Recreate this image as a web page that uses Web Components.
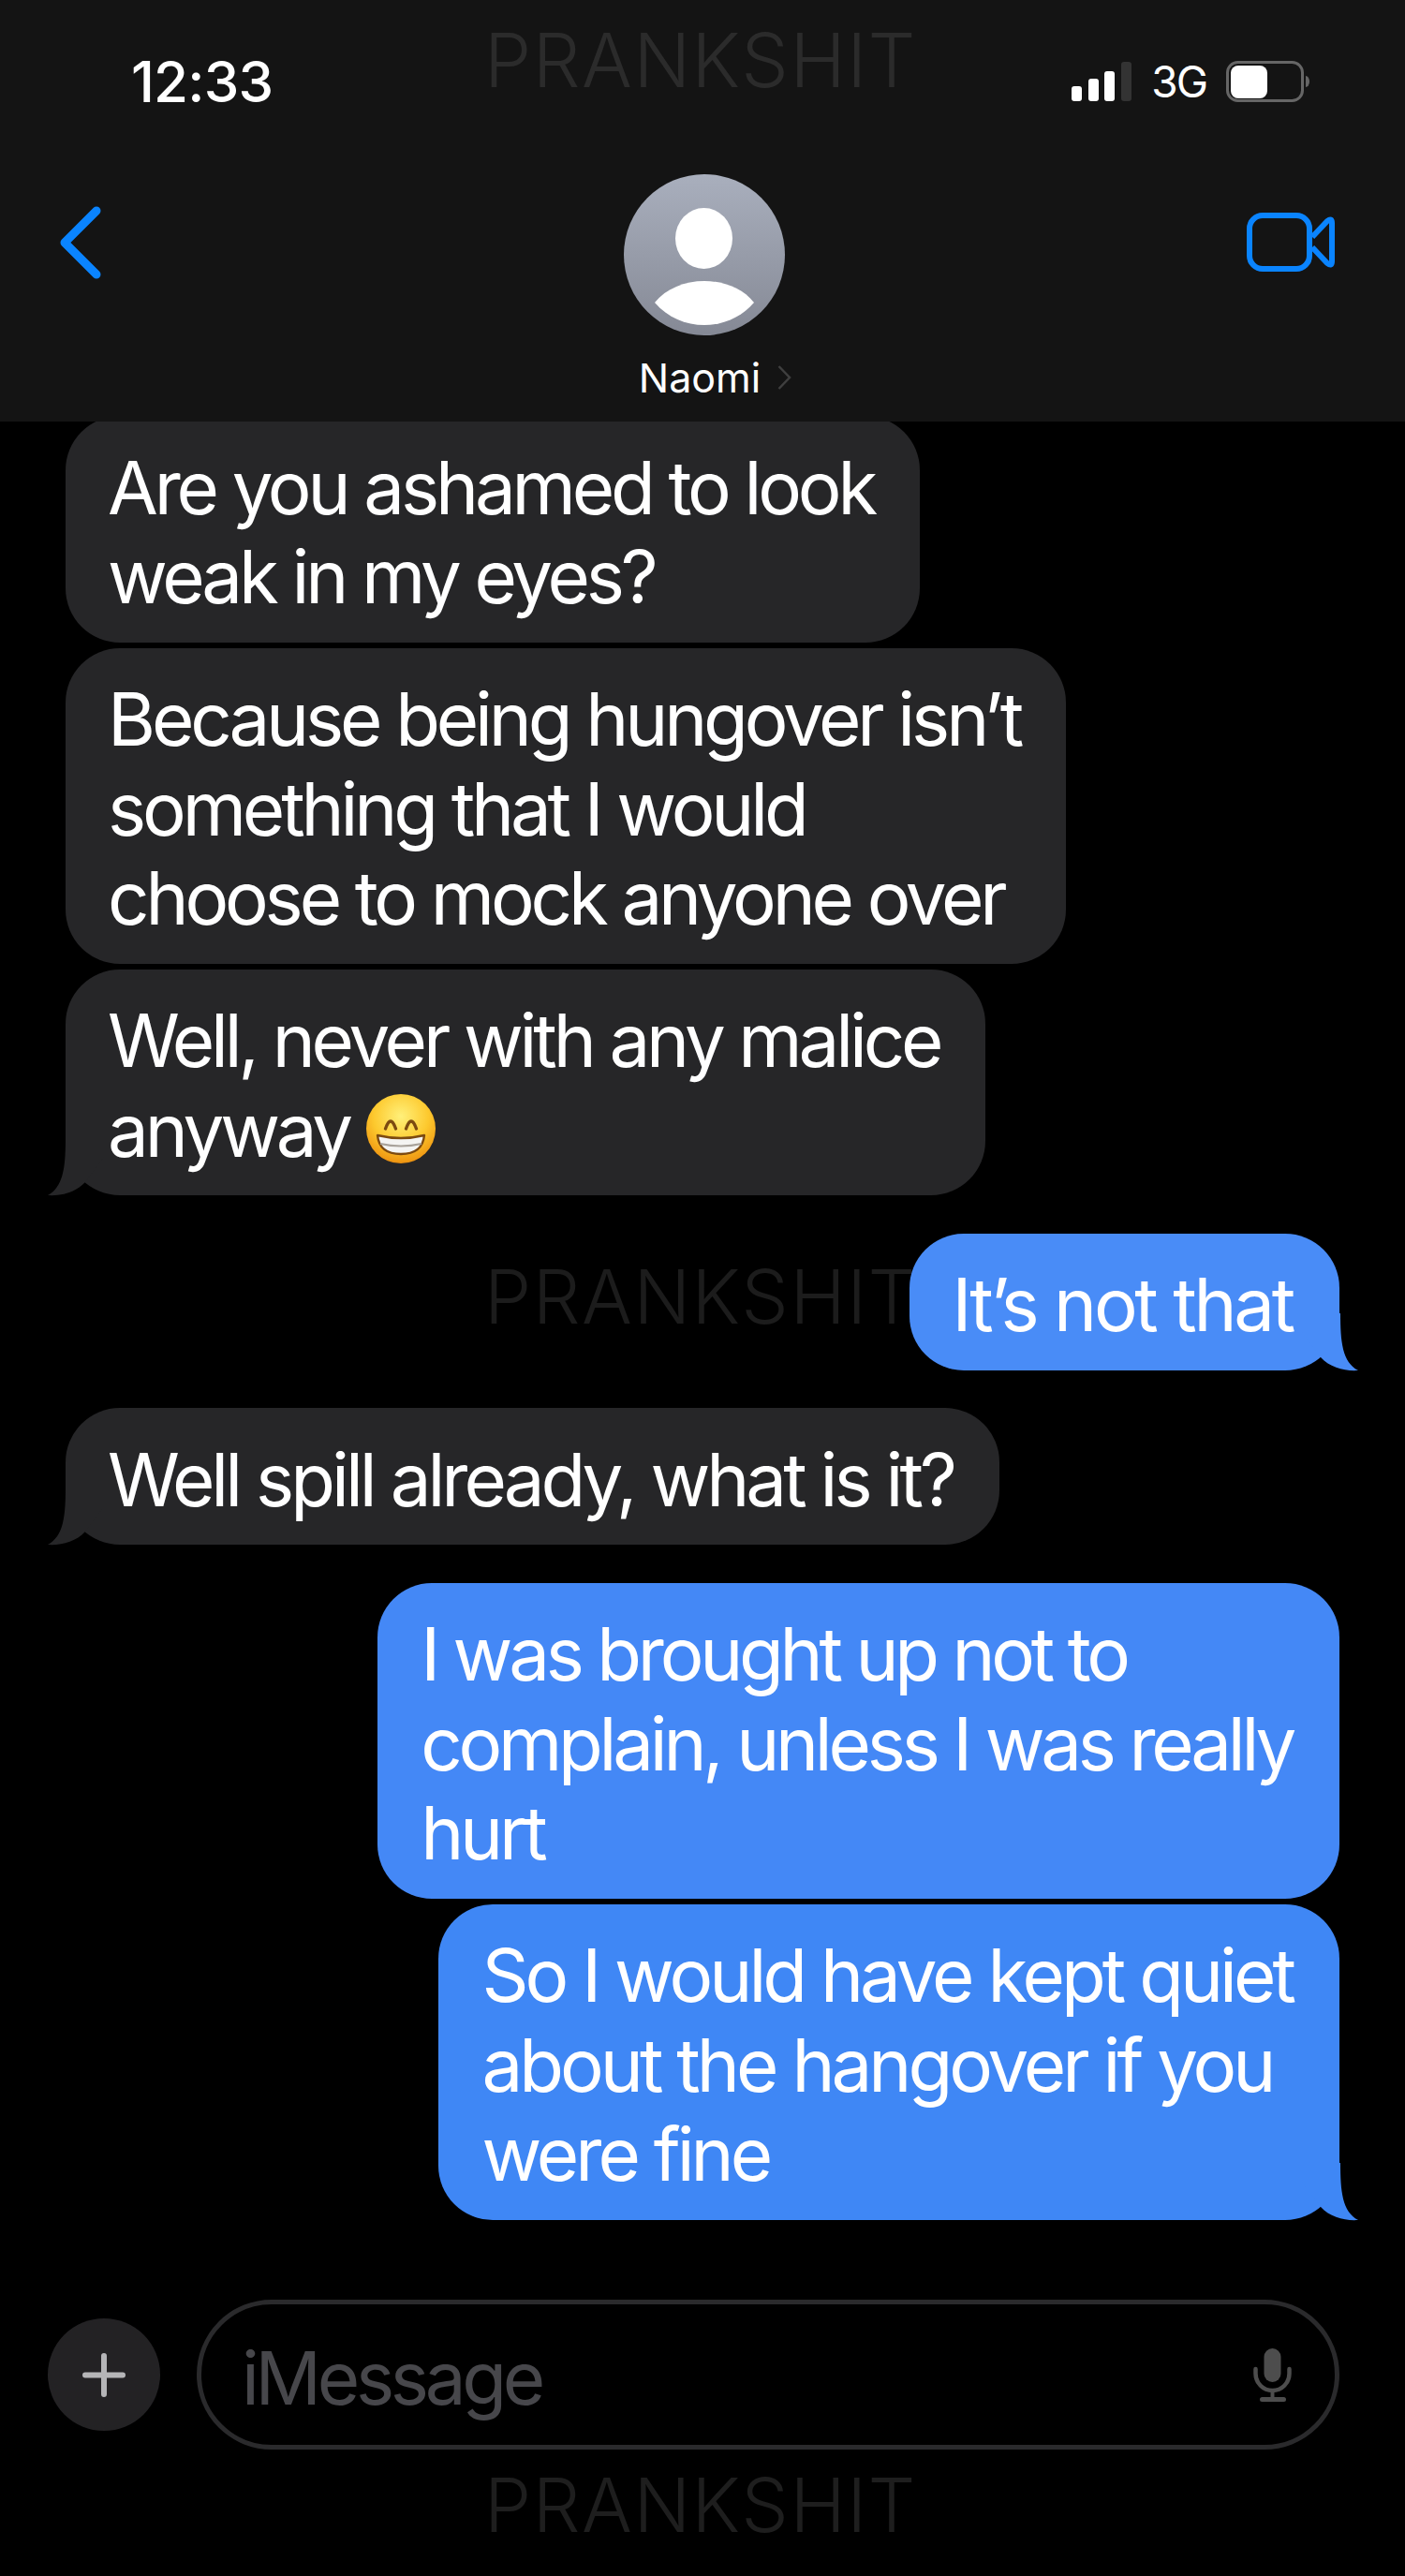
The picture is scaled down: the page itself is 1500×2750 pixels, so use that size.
<!DOCTYPE html>
<html>
<head>
<meta charset="utf-8">
<title>Naomi</title>
<style>
  html, body { margin: 0; background: #000; }
  body { font-family: Inter, "Liberation Sans", sans-serif; color: #fff; height: 2750px; overflow: hidden; }
</style>
</head>
<body>
<imsg-header></imsg-header>
<imsg-thread>
  <imsg-watermark floating style="top: 900px"></imsg-watermark>
  <imsg-bubble>Are you ashamed to look<br>weak in my eyes?</imsg-bubble>
  <imsg-bubble>Because being hungover isn’t<br>something that I would<br>choose to mock anyone over</imsg-bubble>
  <imsg-bubble tail>Well, never with any malice<br>anyway <imsg-grin></imsg-grin></imsg-bubble>
  <imsg-bubble from="me" tail class="gap" style="--out: #498cf7; --track: -3.3px">It’s not that</imsg-bubble>
  <imsg-bubble tail class="gap" style="--track: -4px">Well spill already, what is it?</imsg-bubble>
  <imsg-bubble from="me" class="gap" style="--out: #4488f6; --track: -4.25px">I was brought up not to<br>complain, unless I was really<br>hurt</imsg-bubble>
  <imsg-bubble from="me" tail style="--out: #3f87f5; --track: -4px">So I would have kept quiet<br>about the hangover if you<br>were fine</imsg-bubble>
</imsg-thread>
<imsg-composer></imsg-composer>
<imsg-watermark style="margin-top: 19px; --mark: #1e1e1e"></imsg-watermark>

<script>
class ImsgWatermark extends HTMLElement {
  constructor() {
    super();
    const shadowRoot = this.attachShadow({ mode: 'open' });
    shadowRoot.innerHTML = `
      <style>
        :host {
          display: block;
          width: 1496px;
          text-align: center;
          font: 300 80px/80px Inter, "Liberation Sans", sans-serif;
          letter-spacing: 1.5px;
          color: var(--mark, #1c1c1c);
        }
        :host([floating]) {
          position: absolute;
          left: 0;
        }
      </style>
      PRANKSHIT
    `;
  }
}
customElements.define('imsg-watermark', ImsgWatermark);

class ImsgHeader extends HTMLElement {
  constructor() {
    super();
    const shadowRoot = this.attachShadow({ mode: 'open' });
    shadowRoot.innerHTML = `
      <style>
        :host {
          display: block;
          position: relative;
          z-index: 2;
          height: 450px;
          background: #141414;
          font-family: Inter, "Liberation Sans", sans-serif;
        }
        imsg-watermark {
          position: absolute;
          left: 0;
          top: 24px;
          --mark: #2b2b2b;
        }
        .status {
          display: flex;
          align-items: center;
          height: 60px;
          padding: 57px 102px 0 140px;
        }
        .time {
          font-size: 60px;
          font-weight: 500;
          line-height: 60px;
          letter-spacing: -0.8px;
          margin-right: auto;
        }
        .net {
          font-size: 46px;
          line-height: 60px;
          letter-spacing: -2px;
          margin: 0 21px;
        }
        svg { display: block; }
        .nav {
          display: grid;
          grid-template-columns: 1fr auto 1fr;
          margin-top: 69px;
          padding: 0 75px 0 64px;
        }
        .back { margin-top: 34px; }
        .video { margin-top: 41px; justify-self: end; }
        .who {
          display: flex;
          flex-direction: column;
          align-items: center;
          margin-left: 16px;
        }
        .name {
          display: flex;
          align-items: center;
          gap: 18px;
          margin: 20px 0 0 22px;
          font-size: 43px;
          line-height: 50px;
          letter-spacing: 0;
        }
      </style>
      <imsg-watermark></imsg-watermark>
      <div class="status">
        <span class="time">12:33</span>
        <svg width="64" height="42" viewBox="0 0 64 42">
          <rect x="0" y="26" width="11" height="16" rx="3" fill="#fff"/>
          <rect x="18" y="18" width="11" height="24" rx="3" fill="#fff"/>
          <rect x="35" y="10" width="11" height="32" rx="3" fill="#fff"/>
          <rect x="53" y="0" width="11" height="42" rx="3" fill="#333"/>
        </svg>
        <span class="net">3G</span>
        <svg width="89" height="44" viewBox="0 0 89 44">
          <rect x="1.5" y="1.5" width="80" height="41" rx="11" fill="none" stroke="#666" stroke-width="3"/>
          <rect x="5" y="5" width="39" height="35" rx="8" fill="#fff"/>
          <path d="M85 16 a4 6 0 0 1 0 12 z" fill="#666"/>
        </svg>
      </div>
      <div class="nav">
        <svg class="back" width="44" height="78" viewBox="0 0 44 78" fill="none">
          <path d="M39 5 L5 39 L39 73" stroke="#0a84ff" stroke-width="9" stroke-linecap="round" stroke-linejoin="round"/>
        </svg>
        <div class="who">
          <svg width="172" height="172" viewBox="0 0 172 172">
            <defs>
              <linearGradient id="av" x1="0" y1="0" x2="0" y2="1">
                <stop offset="0" stop-color="#a9afbd"/>
                <stop offset="1" stop-color="#858995"/>
              </linearGradient>
            </defs>
            <circle cx="86" cy="86" r="86" fill="url(#av)"/>
            <ellipse cx="85.5" cy="68.5" rx="30.5" ry="32.5" fill="#fff"/>
            <path d="M33 137 C45 122 65 114 86 114 C107 114 127 122 139 137 C125 153 106 161 86 161 C66 161 47 153 33 137 Z" fill="#fff"/>
          </svg>
          <div class="name">
            <span>Naomi</span>
            <svg width="15" height="26" viewBox="0 0 15 26" fill="none">
              <path d="M1.5 1 L13 13 L1.5 25" stroke="#3f3f3f" stroke-width="2.5"/>
            </svg>
          </div>
        </div>
        <svg class="video" width="94" height="63" viewBox="0 0 94 63" fill="none">
          <rect x="3" y="3" width="64" height="57" rx="14" stroke="#0a84ff" stroke-width="6"/>
          <path d="M70 26 L86 9 Q91 5 91 11 V52 Q91 58 86 54 L70 37" stroke="#0a84ff" stroke-width="6" stroke-linejoin="round"/>
        </svg>
      </div>
    `;
  }
}
customElements.define('imsg-header', ImsgHeader);

class ImsgThread extends HTMLElement {
  constructor() {
    super();
    const shadowRoot = this.attachShadow({ mode: 'open' });
    shadowRoot.innerHTML = `
      <style>
        :host {
          display: flex;
          flex-direction: column;
          position: relative;
          gap: 6px;
          margin-top: -6px;
          padding: 0 70px;
        }
        ::slotted(.gap) {
          margin-top: 34.5px;
        }
      </style>
      <slot></slot>
    `;
  }
}
customElements.define('imsg-thread', ImsgThread);

class ImsgBubble extends HTMLElement {
  constructor() {
    super();
    const shadowRoot = this.attachShadow({ mode: 'open' });
    shadowRoot.innerHTML = `
      <style>
        :host {
          display: block;
          position: relative;
          z-index: 1;
          align-self: flex-start;
          padding: 28.5px 49px 22px 45px;
          border-radius: 58px;
          background: #262628;
          color: #fff;
          font: 420 78px/95.5px Inter, "Liberation Sans", sans-serif;
          letter-spacing: var(--track, -4.15px);
          white-space: nowrap;
          --fill: #262628;
        }
        :host([from="me"]) {
          align-self: flex-end;
          padding: 28.5px 50px 22px 46px;
          background: var(--out, #4488f6);
          --fill: var(--out, #4488f6);
        }
        svg {
          display: none;
          position: absolute;
          left: -19px;
          bottom: -1px;
        }
        :host([tail]) svg { display: block; }
        :host([from="me"]) svg {
          left: auto;
          right: -20px;
          transform: scaleX(-1);
        }
      </style>
      <svg width="60" height="62" viewBox="0 0 60 62">
        <path d="M19 0 C19 30 17 52 0 61 C14 62 30 58 40 47 L60 20 L60 0 Z" fill="var(--fill)"/>
      </svg>
      <slot></slot>
    `;
  }
}
customElements.define('imsg-bubble', ImsgBubble);

class ImsgGrin extends HTMLElement {
  constructor() {
    super();
    const shadowRoot = this.attachShadow({ mode: 'open' });
    shadowRoot.innerHTML = `
      <style>
        :host {
          display: inline-block;
          width: 74px;
          height: 74px;
          vertical-align: -7px;
        }
        svg { display: block; }
      </style>
      <svg width="74" height="74" viewBox="0 0 74 74">
        <defs>
          <radialGradient id="face" cx="0.5" cy="0.32" r="0.72">
            <stop offset="0" stop-color="#fff07a"/>
            <stop offset="0.55" stop-color="#fdc92e"/>
            <stop offset="0.9" stop-color="#f09a14"/>
            <stop offset="1" stop-color="#d87a0c"/>
          </radialGradient>
        </defs>
        <circle cx="37" cy="37" r="37" fill="url(#face)"/>
        <path d="M20.5 37 Q26 21 31.5 37" fill="none" stroke="#7c4a10" stroke-width="3.4" stroke-linecap="round"/>
        <path d="M42.5 37 Q48 21 53.5 37" fill="none" stroke="#7c4a10" stroke-width="3.4" stroke-linecap="round"/>
        <path d="M12 44 Q37 50 62 44 Q60 64 37 64 Q14 64 12 44 Z" fill="#f4f4f2" stroke="#7c4a10" stroke-width="2.4" stroke-linejoin="round"/>
        <path d="M15 53 Q37 58 59 53" fill="none" stroke="#a8a29a" stroke-width="2"/>
      </svg>
    `;
  }
}
customElements.define('imsg-grin', ImsgGrin);

class ImsgComposer extends HTMLElement {
  constructor() {
    super();
    const shadowRoot = this.attachShadow({ mode: 'open' });
    shadowRoot.innerHTML = `
      <style>
        :host {
          display: flex;
          align-items: center;
          gap: 39px;
          margin-top: 85.5px;
          padding: 0 70px 0 51px;
        }
        .plus {
          flex: none;
          width: 120px;
          height: 120px;
          border-radius: 50%;
          background: #232224;
          display: flex;
          align-items: center;
          justify-content: center;
        }
        svg { display: block; }
        .field {
          flex: 1;
          box-sizing: border-box;
          height: 160px;
          border: 5px solid #2a2a2c;
          border-radius: 80px;
          display: flex;
          align-items: center;
          justify-content: space-between;
          padding: 8px 45px 0 43px;
          font: 420 78px/96px Inter, "Liberation Sans", sans-serif;
          letter-spacing: -4.3px;
          color: #47474b;
        }
        .field svg { margin-top: -8px; }
      </style>
      <div class="plus">
        <svg width="46" height="47" viewBox="0 0 46 47">
          <path d="M23 3 V44 M3 23.5 H43" stroke="#b5b5b7" stroke-width="6" stroke-linecap="round"/>
        </svg>
      </div>
      <div class="field">
        <span>iMessage</span>
        <svg width="42" height="57" viewBox="0 0 42 57" fill="none">
          <rect x="11.5" y="0" width="18" height="36" rx="9" fill="#4d4d4d"/>
          <path d="M2.5 22 V27 a18 18 0 0 0 36 0 V22" stroke="#4d4d4d" stroke-width="4.5" stroke-linecap="round"/>
          <path d="M20.5 45 V53" stroke="#4d4d4d" stroke-width="4"/>
          <rect x="7" y="52" width="28" height="5" rx="2.5" fill="#4d4d4d"/>
        </svg>
      </div>
    `;
  }
}
customElements.define('imsg-composer', ImsgComposer);
</script>
</body>
</html>
